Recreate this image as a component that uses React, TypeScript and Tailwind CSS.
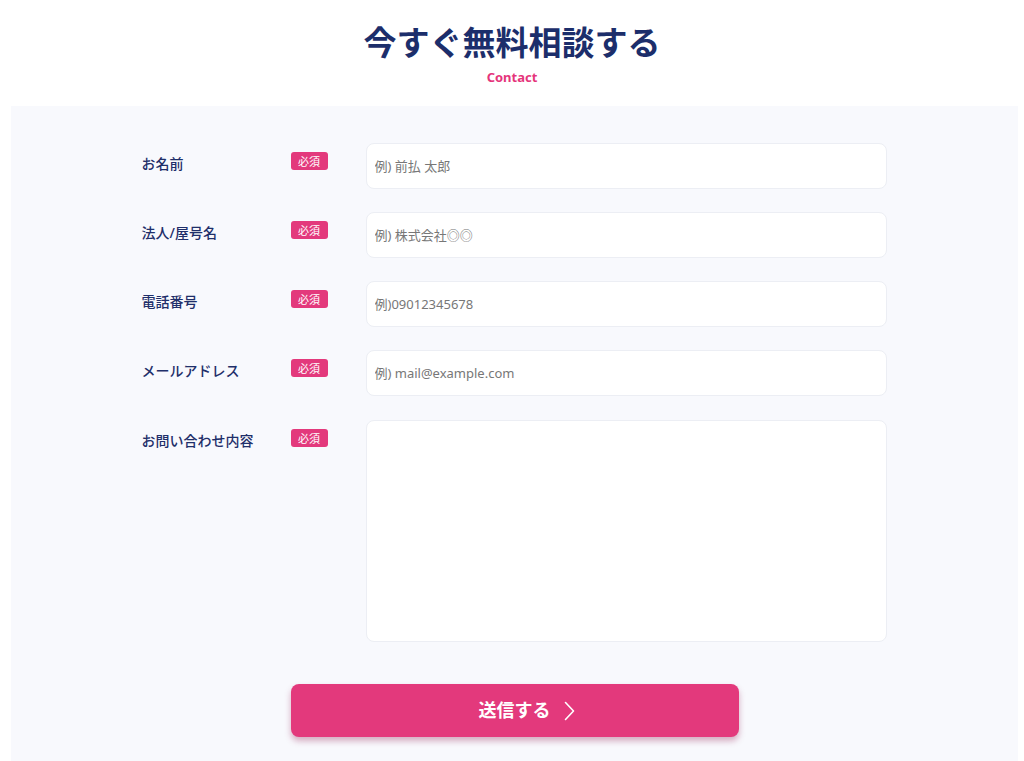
type Field = {
  label: string
  placeholder: string
  multiline?: boolean
}

const fields: Field[] = [
  { label: 'お名前', placeholder: '例) 前払 太郎' },
  { label: '法人/屋号名', placeholder: '例) 株式会社◎◎' },
  { label: '電話番号', placeholder: '例)09012345678' },
  { label: 'メールアドレス', placeholder: '例) mail@example.com' },
  { label: 'お問い合わせ内容', placeholder: '', multiline: true },
]

const INPUT =
  'w-[521px] rounded-lg border border-[#eceef4] bg-white px-2 text-[13px] text-[#333] placeholder:text-[#777] outline-none'

export default function App() {
  return (
    <div className="min-h-[761px] bg-white font-['Noto_Sans','Noto_Sans_CJK_JP',sans-serif]">
      <div className="flex flex-col items-center pt-[18px]">
        <h1 className="text-[33px] font-bold leading-[50px] text-[#1c2e6b]">
          今すぐ無料相談する
        </h1>
        <p className="text-[13px] font-bold leading-[18px] text-[#e5357b]">
          Contact
        </p>
      </div>

      <div className="ml-[11px] mr-[6px] mt-[20px] bg-[#f8f9fd] pb-[30px] pt-[37px]">
        <form className="mx-auto flex w-[746px] flex-col gap-[23px]">
          {fields.map((f) => (
            <div key={f.label} className={`flex items-start ${f.multiline ? 'mt-px' : ''}`}>
              <label className="w-[149px] pt-[10px] text-[14px] font-medium leading-[21px] text-[#1f2f6a]">
                {f.label}
              </label>
              <span className="mt-[9px] flex h-[18px] w-[37px] items-center justify-center rounded-[3px] bg-[#e3397c] text-[11px] leading-none text-white">
                必須
              </span>
              <div className="ml-[38px]">
                {f.multiline ? (
                  <textarea className={`${INPUT} block h-[222px] resize-none py-2`} />
                ) : (
                  <input
                    className={`${INPUT} block h-[46px]`}
                    placeholder={f.placeholder}
                  />
                )}
              </div>
            </div>
          ))}

          <div className="mt-[19px] flex justify-center">
            <button
              type="button"
              className="flex h-[53px] w-[448px] items-center justify-center rounded-lg bg-[#e3397c] text-[18px] font-bold text-white shadow-[0_4px_6px_rgba(150,30,80,0.35)]"
            >
              <span className="relative">
                送信する
                <svg
                  className="absolute left-[calc(100%+13px)] top-1/2 -translate-y-1/2"
                  width="11"
                  height="20"
                  viewBox="0 0 11 20"
                  fill="none"
                  stroke="currentColor"
                  strokeWidth="1.6"
                  strokeLinecap="round"
                  strokeLinejoin="round"
                >
                  <polyline points="1.5,1.5 9.5,10 1.5,18.5" />
                </svg>
              </span>
            </button>
          </div>
        </form>
      </div>
    </div>
  )
}
